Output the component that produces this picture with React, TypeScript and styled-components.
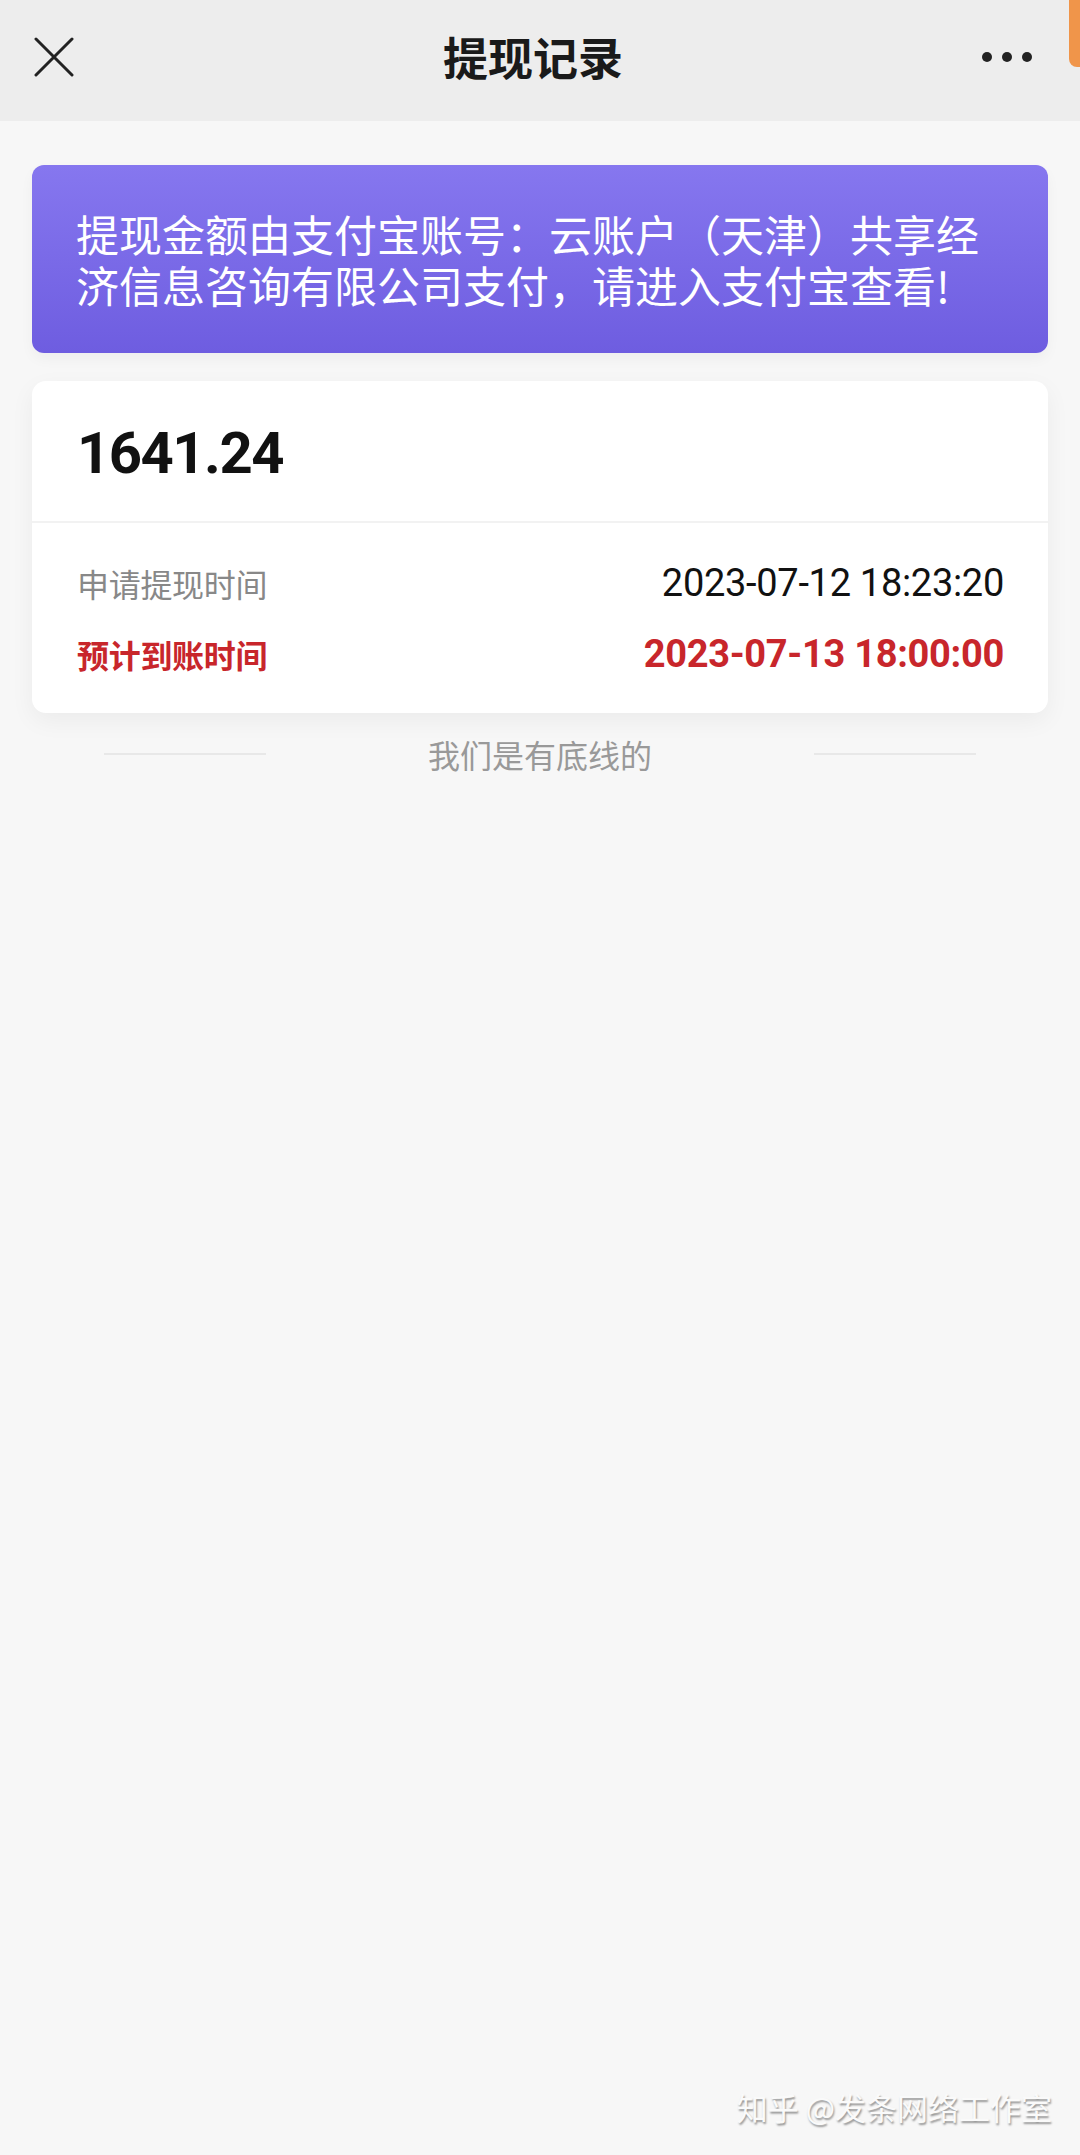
import React from "react";
import styled, { createGlobalStyle } from "styled-components";

const Global = createGlobalStyle`
  html, body { margin: 0; padding: 0; background: #f7f7f7; }
  body { font-family: "Noto Sans CJK SC", "Noto Sans", sans-serif; }
  * { box-sizing: border-box; }
`;

const Page = styled.div`
  position: relative;
  width: 1080px;
  min-height: 2155px;
  background: #f7f7f7;
  overflow: hidden;
`;

const Header = styled.header`
  position: relative;
  height: 121px;
  background: #ededed;
  display: grid;
  grid-template-columns: 1fr auto 1fr;
  align-items: center;
  padding: 0 48px 8px 34px;
`;

const IconButton = styled.div<{ $align: "start" | "end" }>`
  display: flex;
  justify-content: ${(p) => (p.$align === "start" ? "flex-start" : "flex-end")};
  align-items: center;
`;

const Title = styled.h1`
  margin: 0;
  font-family: "Noto Sans CJK SC", sans-serif;
  font-size: 45px;
  font-weight: 700;
  color: #1a1a1a;
  line-height: 1;
`;

const Dots = styled.div`
  display: flex;
  gap: 10px;
  align-items: center;
`;

const Dot = styled.span`
  width: 10px;
  height: 10px;
  border-radius: 50%;
  background: #222;
`;

const CornerTab = styled.div`
  position: absolute;
  top: 0;
  right: 0;
  width: 11px;
  height: 67px;
  background: #f0954a;
  border-bottom-left-radius: 8px;
`;

const Content = styled.main`
  padding: 44px 32px 0;
  display: flex;
  flex-direction: column;
`;

const Banner = styled.div`
  height: 188px;
  border-radius: 12px;
  background: linear-gradient(180deg, #8677ef 0%, #6e5de0 100%);
  display: flex;
  align-items: center;
  padding: 0 44px;
  color: #fff;
  font-size: 43px;
  line-height: 51px;
  box-shadow: 0 6px 14px rgba(0, 0, 0, 0.04);
`;

const Card = styled.section`
  margin-top: 28px;
  background: #fff;
  border-radius: 14px;
  box-shadow: 0 8px 24px rgba(0, 0, 0, 0.05);
  overflow: hidden;
`;

const AmountBlock = styled.div`
  height: 142px;
  display: flex;
  align-items: center;
  padding: 4px 44px 0 45px;
  border-bottom: 2px solid #f2f2f2;
`;

const Amount = styled.div`
  font-family: Roboto, "Noto Sans", sans-serif;
  font-weight: 700;
  font-size: 58px;
  letter-spacing: -1.5px;
  color: #111;
  line-height: 1;
`;

const Rows = styled.div`
  display: flex;
  flex-direction: column;
  gap: 27px;
  padding: 38px 44px 37px 45px;
`;

const Row = styled.div<{ $accent?: boolean }>`
  display: flex;
  justify-content: space-between;
  align-items: center;
  height: 44px;
  color: ${(p) => (p.$accent ? "#c8262b" : "#888")};
  font-weight: ${(p) => (p.$accent ? 700 : 400)};
`;

const Label = styled.span`
  font-family: "Noto Sans CJK SC", sans-serif;
  font-size: 32px;
  letter-spacing: -0.3px;
`;

const Value = styled.span<{ $accent?: boolean }>`
  font-family: Roboto, "Noto Sans", sans-serif;
  font-size: 38px;
  letter-spacing: -0.3px;
  color: ${(p) => (p.$accent ? "#c8262b" : "#111")};
`;

const Divider = styled.div`
  margin-top: 21px;
  display: flex;
  align-items: center;
  justify-content: center;
  gap: 162px;
  height: 40px;
`;

const DividerLine = styled.span`
  width: 162px;
  height: 2px;
  background: #e8e8e8;
`;

const DividerText = styled.span`
  font-size: 32px;
  color: #999;
  line-height: 40px;
`;

const Watermark = styled.div`
  position: absolute;
  right: 28px;
  top: 2088px;
  font-family: "Noto Sans CJK SC", sans-serif;
  font-size: 31px;
  color: #fafafa;
  text-shadow: 1px 2px 2px rgba(0, 0, 0, 0.4);
  line-height: 1.2;
`;

export default function App() {
  return (
    <Page>
      <Global />
      <Header>
        <IconButton $align="start">
          <svg width="40" height="40" viewBox="0 0 40 40" fill="none">
            <path d="M2 2 L38 38 M38 2 L2 38" stroke="#222" strokeWidth="3" strokeLinecap="round" />
          </svg>
        </IconButton>
        <Title>提现记录</Title>
        <IconButton $align="end">
          <Dots>
            <Dot />
            <Dot />
            <Dot />
          </Dots>
        </IconButton>
        <CornerTab />
      </Header>
      <Content>
        <Banner>提现金额由支付宝账号：云账户（天津）共享经济信息咨询有限公司支付，请进入支付宝查看!</Banner>
        <Card>
          <AmountBlock>
            <Amount>1641.24</Amount>
          </AmountBlock>
          <Rows>
            <Row>
              <Label>申请提现时间</Label>
              <Value>2023-07-12 18:23:20</Value>
            </Row>
            <Row $accent>
              <Label>预计到账时间</Label>
              <Value $accent>2023-07-13 18:00:00</Value>
            </Row>
          </Rows>
        </Card>
        <Divider>
          <DividerLine />
          <DividerText>我们是有底线的</DividerText>
          <DividerLine />
        </Divider>
      </Content>
      <Watermark>知乎 @发条网络工作室</Watermark>
    </Page>
  );
}
